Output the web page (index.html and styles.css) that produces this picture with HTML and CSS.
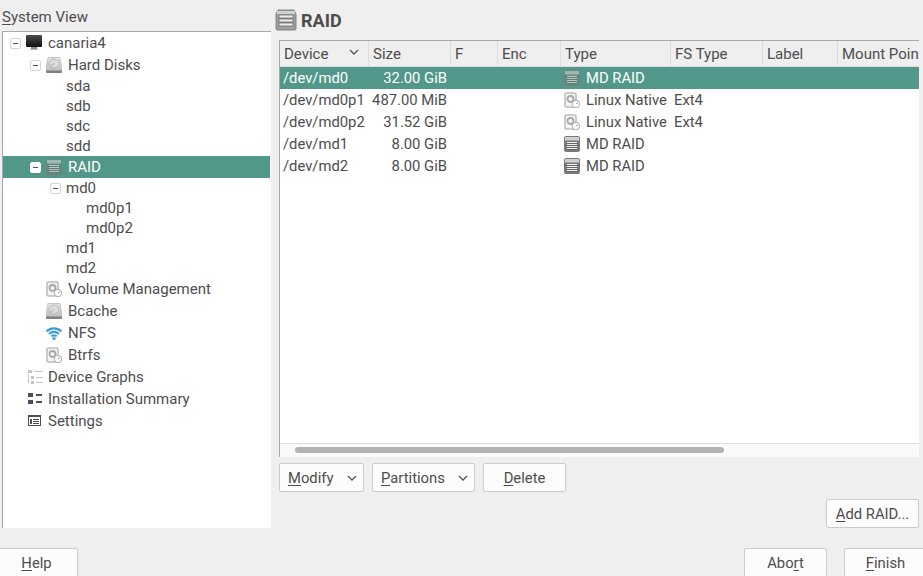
FILE: index.html
```html
<!DOCTYPE html>
<html>
<head>
    <meta charset="utf-8">
    <title>RAID</title>
    <link rel="stylesheet" href="styles.css">
</head>
<body>
<svg class="defs" width="0" height="0">
    <defs>
        <linearGradient id="screen" x1="0" y1="0" x2="0" y2="1">
            <stop offset="0" stop-color="#4a4a50"/>
            <stop offset="1" stop-color="#111114"/>
        </linearGradient>
        <linearGradient id="disk" x1="0" y1="0" x2="0" y2="1">
            <stop offset="0" stop-color="#e8e8e8"/>
            <stop offset="1" stop-color="#bcbcbc"/>
        </linearGradient>
        <symbol id="i-monitor" viewBox="0 0 16 16">
            <rect x="0" y="0" width="16" height="12" rx="1" fill="url(#screen)"/>
            <rect x="5" y="12" width="6" height="2" fill="#8a8a8a"/>
            <rect x="4" y="14" width="8" height="1" fill="#bdbdbd"/>
        </symbol>
        <symbol id="i-hdd" viewBox="0 0 16 16">
            <path d="M2 .5h12l2 12v2H0v-2z" fill="url(#disk)" stroke="#a8a8a8" stroke-width=".6"/>
            <ellipse cx="8" cy="6.5" rx="5" ry="4.5" fill="#dcdcdc" stroke="#a8a8a8" stroke-width=".7"/>
            <path d="M8 6.5l-4 3" stroke="#9a9a9a" stroke-width=".8"/>
            <rect x="0" y="13.5" width="16" height="2.5" rx="1" fill="#808080"/>
        </symbol>
        <symbol id="i-raid" viewBox="0 0 16 16">
            <rect x="0" y="0" width="16" height="16" rx="2" fill="#7a7a7a"/>
            <rect x="1" y="1" width="14" height="3.5" fill="#cfcfcf"/>
            <rect x="3" y="6" width="10" height="8" fill="#f0f0f0"/>
            <path d="M3 7.5h10M3 9.5h10M3 11.5h10M3 13.5h10" stroke="#666" stroke-width="1"/>
        </symbol>
        <symbol id="i-raid-big" viewBox="0 0 22 22">
            <path d="M3 1h16l2 4v15l-1 1H2l-1-1V5z" fill="#a0a0a0" stroke="#707070" stroke-width=".8"/>
            <rect x="2" y="2" width="18" height="3" fill="#d0d0d0"/>
            <rect x="4" y="6" width="14" height="3" fill="#ececec" stroke="#606060" stroke-width=".7"/>
            <rect x="4" y="10" width="14" height="3" fill="#ececec" stroke="#606060" stroke-width=".7"/>
            <rect x="4" y="14" width="14" height="3" fill="#ececec" stroke="#606060" stroke-width=".7"/>
        </symbol>
        <symbol id="i-volume" viewBox="0 0 16 16">
            <rect x="1" y="1" width="11" height="14" rx="1.5" fill="#f4f4f4" stroke="#bdbdbd" stroke-width="1.6"/>
            <circle cx="6.5" cy="7" r="3" fill="none" stroke="#a8a8a8" stroke-width="1.8"/>
            <circle cx="12" cy="12" r="3.6" fill="#fff" stroke="#b8b8b8" stroke-width="1.2"/>
            <path d="M12 12l2-1.5" stroke="#999" stroke-width="1"/>
        </symbol>
        <symbol id="i-wifi" viewBox="0 0 16 16">
            <g fill="none" stroke="#3f9bdc" stroke-width="2.1">
                <path d="M.6 6.4a10.5 10.5 0 0 1 14.8 0"/>
                <path d="M3 9a7 7 0 0 1 10 0"/>
                <path d="M5.4 11.4a3.6 3.6 0 0 1 5.2 0"/>
            </g>
            <circle cx="8" cy="13.6" r="1.6" fill="#3f9bdc"/>
        </symbol>
        <symbol id="i-graphs" viewBox="0 0 16 16">
            <g fill="#c4c4c4">
                <rect x="1" y="1" width="4" height="3"/>
                <rect x="7" y="2" width="9" height="1"/>
                <rect x="4" y="7" width="3" height="3"/>
                <rect x="9" y="8" width="7" height="1"/>
                <rect x="4" y="12" width="3" height="3"/>
                <rect x="9" y="13" width="7" height="1"/>
                <rect x="1" y="5" width="1" height="9"/>
            </g>
        </symbol>
        <symbol id="i-summary" viewBox="0 0 16 16">
            <g fill="#4c4f58">
                <rect x="1" y="2" width="5" height="4"/>
                <rect x="1" y="9" width="5" height="4"/>
                <rect x="9" y="3" width="6" height="2"/>
                <rect x="9" y="10" width="6" height="2"/>
            </g>
        </symbol>
        <symbol id="i-settings" viewBox="0 0 16 16">
            <rect x="1.5" y="2.5" width="12" height="10" fill="none" stroke="#4c4f58"/>
            <rect x="1" y="2" width="13" height="2" fill="#4c4f58"/>
            <rect x="3" y="6" width="2" height="5" fill="#4c4f58"/>
            <path d="M6 6.5h6M6 8.5h6M6 10.5h6" stroke="#4c4f58"/>
        </symbol>
    </defs>
</svg>

<div class="window">
    <div class="main">
        <div class="side">
            <div class="side-title"><u>S</u>ystem View</div>
            <div class="tree">
                <div class="node lvl0"><span class="exp"></span><svg class="ico"><use href="#i-monitor"/></svg>canaria4</div>
                <div class="node lvl1"><span class="exp"></span><svg class="ico"><use href="#i-hdd"/></svg>Hard Disks</div>
                <div class="leaf lvl2">sda</div>
                <div class="leaf lvl2">sdb</div>
                <div class="leaf lvl2">sdc</div>
                <div class="leaf lvl2">sdd</div>
                <div class="node lvl1 selected"><span class="exp"></span><svg class="ico"><use href="#i-raid"/></svg>RAID</div>
                <div class="leaf lvl1b"><span class="exp"></span>md0</div>
                <div class="leaf lvl3">md0p1</div>
                <div class="leaf lvl3">md0p2</div>
                <div class="leaf lvl2">md1</div>
                <div class="leaf lvl2">md2</div>
                <div class="node lvl1n"><svg class="ico"><use href="#i-volume"/></svg>Volume Management</div>
                <div class="node lvl1n"><svg class="ico"><use href="#i-hdd"/></svg>Bcache</div>
                <div class="node lvl1n"><svg class="ico"><use href="#i-wifi"/></svg>NFS</div>
                <div class="node lvl1n"><svg class="ico"><use href="#i-volume"/></svg>Btrfs</div>
                <div class="node lvl0n"><svg class="ico"><use href="#i-graphs"/></svg>Device Graphs</div>
                <div class="node lvl0n"><svg class="ico"><use href="#i-summary"/></svg>Installation Summary</div>
                <div class="node lvl0n"><svg class="ico"><use href="#i-settings"/></svg>Settings</div>
            </div>
        </div>

        <div class="content">
            <h1 class="heading"><svg class="heading-ico"><use href="#i-raid-big"/></svg>RAID</h1>
            <div class="frame">
                <table class="devices">
                    <colgroup>
                        <col class="c-device"><col class="c-size"><col class="c-f"><col class="c-enc">
                        <col class="c-type"><col class="c-fs"><col class="c-label"><col class="c-mount">
                    </colgroup>
                    <thead>
                        <tr>
                            <th class="sorted">Device</th><th>Size</th><th>F</th><th>Enc</th>
                            <th>Type</th><th>FS Type</th><th>Label</th><th>Mount Point</th>
                        </tr>
                    </thead>
                    <tbody>
                        <tr class="selected">
                            <td>/dev/md0</td><td class="num">32.00 GiB</td><td></td><td></td>
                            <td><span class="type"><svg class="ico"><use href="#i-raid"/></svg>MD RAID</span></td><td></td><td></td><td></td>
                        </tr>
                        <tr>
                            <td>/dev/md0p1</td><td class="num">487.00 MiB</td><td></td><td></td>
                            <td><span class="type"><svg class="ico"><use href="#i-volume"/></svg>Linux Native</span></td><td>Ext4</td><td></td><td></td>
                        </tr>
                        <tr>
                            <td>/dev/md0p2</td><td class="num">31.52 GiB</td><td></td><td></td>
                            <td><span class="type"><svg class="ico"><use href="#i-volume"/></svg>Linux Native</span></td><td>Ext4</td><td></td><td></td>
                        </tr>
                        <tr>
                            <td>/dev/md1</td><td class="num">8.00 GiB</td><td></td><td></td>
                            <td><span class="type"><svg class="ico"><use href="#i-raid"/></svg>MD RAID</span></td><td></td><td></td><td></td>
                        </tr>
                        <tr>
                            <td>/dev/md2</td><td class="num">8.00 GiB</td><td></td><td></td>
                            <td><span class="type"><svg class="ico"><use href="#i-raid"/></svg>MD RAID</span></td><td></td><td></td><td></td>
                        </tr>
                    </tbody>
                </table>
                <div class="hscroll"><div class="thumb"></div></div>
            </div>
            <div class="actions">
                <button class="btn menu modify"><u>M</u>odify</button>
                <button class="btn menu partitions"><u>P</u>artitions</button>
                <button class="btn delete"><u>D</u>elete</button>
            </div>
            <div class="add-row">
                <button class="btn add"><u>A</u>dd RAID...</button>
            </div>
        </div>
    </div>

    <div class="footer">
        <button class="btn wide"><u>H</u>elp</button>
        <div class="footer-right">
            <button class="btn wide">Abo<u>r</u>t</button>
            <button class="btn wide"><u>F</u>inish</button>
        </div>
    </div>
</div>
</body>
</html>
```

FILE: styles.css
```css
html, body {
    margin: 0;
    height: 100%;
}
body {
    background-color: #efefef;
    color: #4d4d4d;
    font-family: Roboto, "Liberation Sans", sans-serif;
    font-size: 15px;
    overflow: hidden;
}
.defs {
    position: absolute;
}
u {
    text-underline-offset: 2px;
}
.window {
    width: 923px;
    height: 576px;
    overflow: hidden;
}
.main {
    display: flex;
    height: 548px;
}

/* left tree */
.side {
    width: 271px;
    height: 528px;
    display: flex;
    flex-direction: column;
    flex-shrink: 0;
}
.side-title {
    height: 31px;
    line-height: 35px;
    padding-left: 2px;
    box-sizing: border-box;
}
.tree {
    flex: 1;
    margin-left: 2px;
    background-color: #fff;
    border-top: 1px solid #aaa;
    border-left: 1px solid #aaa;
}
.node {
    height: 22px;
    display: flex;
    align-items: center;
    margin-right: 1px;
}
.leaf {
    height: 20px;
    display: flex;
    align-items: center;
}
.lvl0 { padding-left: 7px; }
.lvl1 { padding-left: 27px; }
.lvl1b { padding-left: 47px; }
.lvl2 { padding-left: 63px; }
.lvl3 { padding-left: 83px; }
.lvl1n { padding-left: 43px; }
.lvl0n { padding-left: 24px; }
.lvl0n .ico { margin-right: 5px; }
.exp {
    width: 9px;
    height: 9px;
    margin-right: 5px;
    border: 1px solid #d4d4d4;
    border-radius: 2px;
    background: linear-gradient(#555, #555) center / 5px 1px no-repeat #fff;
    flex-shrink: 0;
}
.ico {
    width: 16px;
    height: 16px;
    margin-right: 6px;
    flex-shrink: 0;
}
.selected {
    background-color: #52988a;
    color: #fff;
}
.selected .ico {
    opacity: .6;
}
.selected .exp {
    border-color: #fff;
    background-color: #fff;
}

/* right side */
.content {
    flex: 1;
    padding-left: 4px;
    min-width: 0;
}
.heading {
    height: 40px;
    margin: 0;
    box-sizing: border-box;
    display: flex;
    align-items: center;
    font-size: 18px;
    font-weight: bold;
}
.heading-ico {
    width: 22px;
    height: 22px;
    margin-right: 4px;
}
.frame {
    width: 640px;
    height: 417px;
    margin-left: 4px;
    box-sizing: border-box;
    display: flex;
    flex-direction: column;
    background-color: #fff;
    border-top: 1px solid #aaa;
    border-left: 1px solid #aaa;
}
.devices {
    table-layout: fixed;
    width: 639px;
    border-collapse: separate;
    border-spacing: 0;
    flex: 0 0 auto;
}
.c-device { width: 89px; }
.c-size { width: 82px; }
.c-f { width: 47px; }
.c-enc { width: 63px; }
.c-type { width: 110px; }
.c-fs { width: 92px; }
.c-label { width: 75px; }
.c-mount { width: 81px; }
.devices th {
    height: 26px;
    padding: 0 0 0 4px;
    box-sizing: border-box;
    background-color: #efefef;
    border-right: 1px solid #dcdcdc;
    border-bottom: 1px solid #dcdcdc;
    font-weight: normal;
    text-align: left;
    white-space: nowrap;
    overflow: hidden;
}
.devices th:last-child {
    border-right: none;
}
.devices th.sorted {
    background: url("data:image/svg+xml,%3Csvg xmlns='http://www.w3.org/2000/svg' width='10' height='6'%3E%3Cpath d='M1 1l4 4 4-4' fill='none' stroke='%23555' stroke-width='1.3'/%3E%3C/svg%3E") no-repeat 69px 8px #efefef;
}
.devices td {
    height: 22px;
    padding: 0 0 0 3px;
    box-sizing: border-box;
    font-size: 14.8px;
    white-space: nowrap;
    overflow: visible;
}
.devices td.num {
    text-align: right;
    padding: 0 4px 0 0;
}
.type {
    display: flex;
    align-items: center;
    margin-left: 0;
}
.hscroll {
    margin-top: auto;
    height: 14px;
    border-top: 1px solid #ddd;
    padding-top: 3px;
    box-sizing: border-box;
    background-color: #fafafa;
}
.thumb {
    width: 429px;
    height: 6px;
    margin-left: 15px;
    border-radius: 3px;
    background-color: #b4b4b4;
}

/* buttons */
.btn {
    height: 29px;
    padding: 1px 0 0;
    box-sizing: border-box;
    background-color: #fcfcfc;
    border: 1px solid #ccc;
    border-radius: 2px;
    color: #4d4d4d;
    font-family: inherit;
    font-size: 14.8px;
}
.actions {
    display: flex;
    gap: 8px;
    margin: 6px 0 0 4px;
}
.menu {
    text-align: left;
    padding-left: 8px;
    background: url("data:image/svg+xml,%3Csvg xmlns='http://www.w3.org/2000/svg' width='10' height='6'%3E%3Cpath d='M1 1l4 4 4-4' fill='none' stroke='%23555' stroke-width='1.3'/%3E%3C/svg%3E") no-repeat right 6px center #fcfcfc;
}
.modify { width: 85px; }
.partitions { width: 103px; }
.delete { width: 83px; }
.add-row {
    display: flex;
    justify-content: flex-end;
    margin: 7px 4px 0 0;
}
.add { width: 93px; }
.footer {
    display: flex;
    justify-content: space-between;
    margin: 0 -4px 0 -5px;
}
.footer-right {
    display: flex;
    gap: 17px;
}
.wide {
    width: 83px;
}
```
